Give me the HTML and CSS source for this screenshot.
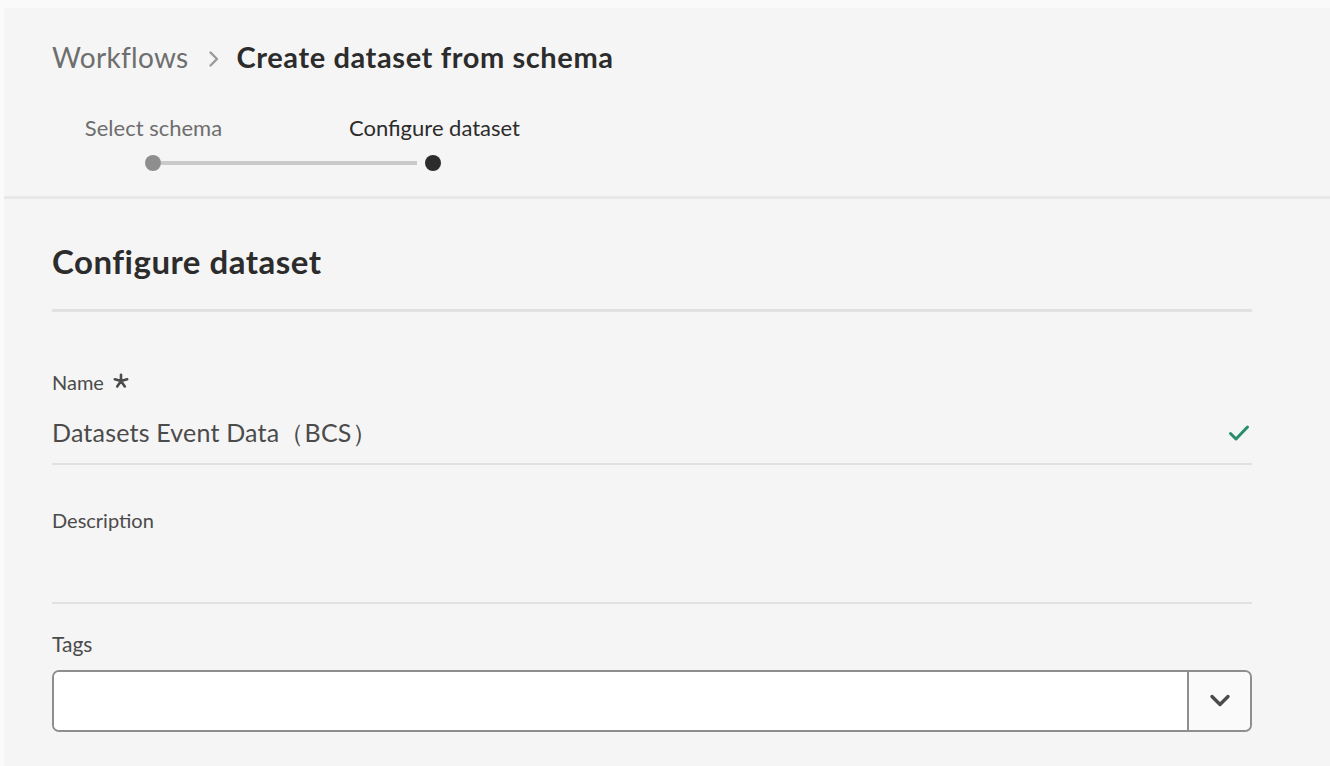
FILE: index.html
```html
<!DOCTYPE html>
<html lang="en">
<head>
<meta charset="utf-8">
<title>Create dataset from schema</title>
<link rel="stylesheet" href="styles.css">
</head>
<body>
<div class="page">
  <header class="page-header">
    <nav class="breadcrumbs">
      <span class="crumb">Workflows</span>
      <svg class="crumb-sep" width="12" height="18" viewBox="0 0 12 18" aria-hidden="true"><path d="M2.5 2.5l6.5 6.5-6.5 6.5" fill="none" stroke="#9a9a9a" stroke-width="2.4" stroke-linecap="round" stroke-linejoin="round"/></svg>
      <span class="crumb current">Create dataset from schema</span>
    </nav>
    <div class="steps">
      <div class="step-labels">
        <span class="step-label done">Select schema</span>
        <span class="step-label active">Configure dataset</span>
      </div>
      <div class="step-track">
        <span class="dot dot-done"></span>
        <span class="track-line"></span>
        <span class="dot dot-active"></span>
      </div>
    </div>
  </header>
  <main class="form-area">
    <h1 class="form-title">Configure dataset</h1>
    <div class="field">
      <div class="label">Name
        <svg class="req" width="16" height="16" viewBox="0 0 16 16" aria-label="required"><path d="M8 1.8V8M1.8 6.3L8 8l6.2-1.7M8 8l-3.8 5.4M8 8l3.8 5.4" fill="none" stroke="#4b4b4b" stroke-width="2.6" stroke-linecap="round" stroke-linejoin="round"/></svg>
      </div>
      <div class="value-row">
        <span class="value">Datasets Event Data（BCS）</span>
        <svg class="check" width="22" height="18" viewBox="0 0 22 18" aria-hidden="true"><path d="M2.5 9.5l5.5 5.5L19.5 3" fill="none" stroke="#268e6c" stroke-width="3" stroke-linecap="round" stroke-linejoin="round"/></svg>
      </div>
    </div>
    <div class="field">
      <div class="label desc-label">Description</div>
      <div class="value-row desc-row"></div>
    </div>
    <div class="field">
      <div class="label tags-label">Tags</div>
      <div class="combo">
        <div class="combo-input"></div>
        <div class="combo-btn">
          <svg width="24" height="16" viewBox="0 0 24 16" aria-hidden="true"><path d="M4 3.5l8 8 8-8" fill="none" stroke="#4b4b4b" stroke-width="3.4" stroke-linecap="round" stroke-linejoin="round"/></svg>
        </div>
      </div>
    </div>
  </main>
</div>
</body>
</html>
```
FILE: styles.css
```css
* { box-sizing: border-box; }
html, body { margin: 0; padding: 0; }
body {
  background: #fafafa;
  font-family: "Lato", "Open Sans", sans-serif;
  color: #2c2c2c;
}
.page {
  margin: 8px 0 0 4px;
  background: #f5f5f5;
  min-height: 758px;
}
.page-header {
  padding: 31px 0 0 48px;
  border-bottom: 3px solid #e8e8e8;
  height: 191px;
}
.breadcrumbs {
  display: flex;
  align-items: center;
  height: 36px;
}
.crumb {
  font-size: 28px;
  line-height: 36px;
  color: #6e6e6e;
  letter-spacing: 0.3px;
}
.crumb.current {
  color: #2c2c2c;
  font-weight: 700;
  font-size: 29px;
  letter-spacing: 0.6px;
}
.crumb-sep { margin: 3px 17px 0 19px; }
.steps { margin-top: 39px; }
.step-labels {
  display: grid;
  grid-template-columns: 281px 281px;
  margin-left: -39px;
  height: 28px;
}
.step-label {
  text-align: center;
  font-size: 22px;
  line-height: 28px;
}
.step-label.done { color: #6e6e6e; }
.step-label.active { color: #2c2c2c; }
.step-track {
  display: flex;
  align-items: center;
  margin: 13px 0 0 93px;
  height: 16px;
}
.dot {
  width: 16px;
  height: 16px;
  border-radius: 50%;
  flex: none;
}
.dot-done { background: #8e8e8e; }
.dot-active { background: #2c2c2c; }
.track-line {
  width: 256px;
  height: 4px;
  background: #cacaca;
  margin-right: 8px;
}
.form-area {
  padding: 42px 0 40px 48px;
  width: 1248px;
}
.form-title {
  margin: 0;
  font-size: 33px;
  line-height: 40px;
  font-weight: 700;
  letter-spacing: 0.5px;
  padding-bottom: 28px;
  border-bottom: 3px solid #e1e1e1;
}
.label {
  display: flex;
  align-items: center;
  font-size: 20px;
  line-height: 24px;
  height: 24px;
  color: #4b4b4b;
  margin-top: 58px;
}
.req { margin-left: 9px; margin-top: -2px; }
.value-row {
  display: flex;
  align-items: flex-start;
  justify-content: space-between;
  margin-top: 16px;
  height: 55px;
  border-bottom: 2px solid #e1e1e1;
}
.value {
  font-size: 25px;
  line-height: 44px;
  color: #4b4b4b;
  letter-spacing: 0.2px;
}
.check { margin: 14px 2px 0 0; }
.desc-label { margin-top: 43px; }
.desc-row { margin-top: 0; height: 72px; }
.tags-label { margin-top: 28px; font-size: 21px; }
.combo {
  display: flex;
  margin-top: 14px;
  height: 62px;
  border: 2px solid #8e8e8e;
  border-radius: 7px;
  overflow: hidden;
}
.combo-input { flex: 1; background: #fff; }
.combo-btn {
  width: 63px;
  border-left: 2px solid #8e8e8e;
  background: #fafafa;
  display: flex;
  align-items: center;
  justify-content: center;
}
```
